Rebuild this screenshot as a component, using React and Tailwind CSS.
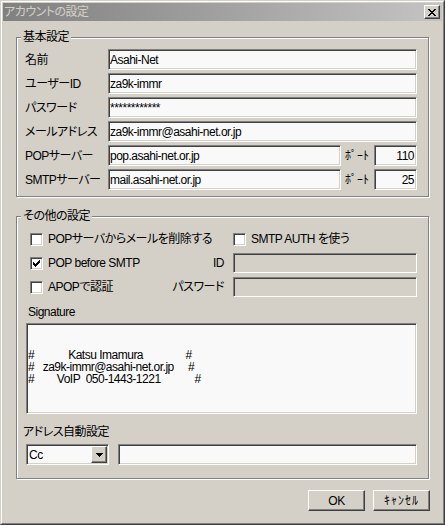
import React from 'react';

// Win2k-style bevels
const sunken =
  'border border-t-[#808080] border-l-[#808080] border-r-white border-b-white shadow-[inset_1px_1px_0_#404040,inset_-1px_-1px_0_#d4d0c8]';
const raised =
  'border border-t-white border-l-white border-r-[#404040] border-b-[#404040] shadow-[inset_-1px_-1px_0_#808080]';
const etched = 'border border-[#808080] shadow-[inset_1px_1px_0_#ffffff,1px_1px_0_#ffffff]';

function TextBox({ value = '', className = '', disabled = false, right = false, h = 'h-[21px]' }) {
  return (
    <div
      className={`${sunken} ${h} flex items-center whitespace-pre overflow-hidden ${
        disabled ? 'bg-[#d4d0c8]' : 'bg-[#f9f9f9]'
      } ${right ? 'justify-end pr-[2px]' : 'pl-[1px]'} ${className}`}
    >
      {value}
    </div>
  );
}

function CheckBox({ checked = false }) {
  return (
    <div className={`${sunken} w-[13px] h-[13px] shrink-0 bg-white flex items-center justify-center`}>
      {checked && (
        <svg width="7" height="7" viewBox="0 0 7 7" shapeRendering="crispEdges">
          <path
            d="M6 0h1v1h-1z M5 1h2v1h-2z M0 2h1v1h-1z M4 2h3v1h-3z M0 3h2v1h-2z M3 3h3v1h-3z M0 4h5v1h-5z M1 5h3v1h-3z M2 6h1v1h-1z"
            fill="#000"
          />
        </svg>
      )}
    </div>
  );
}

function GroupBox({ title, className = '', children }) {
  return (
    <div className={`${etched} ${className}`}>
      <div className="-mt-[8px] ml-[4px] w-fit px-[2px] bg-[#d4d0c8] leading-[14px]">{title}</div>
      {children}
    </div>
  );
}

function Row({ label, children }) {
  return (
    <div className="flex items-center h-[21px]">
      <span className="w-[83px] shrink-0 leading-[14px]">{label}</span>
      {children}
    </div>
  );
}

export default function App() {
  const sig = [
    '',
    '',
    '#            Katsu Imamura               #',
    '#   za9k-immr@asahi-net.or.jp     #',
    '#        VoIP  050-1443-1221            #',
  ];

  return (
    <div className="w-[445px] h-[525px] border border-t-[#d4d0c8] border-l-[#d4d0c8] border-r-[#404040] border-b-[#404040] bg-[#d4d0c8] text-black text-[12px] leading-[14px] tracking-[-0.5px] [font-feature-settings:'palt'] font-['Liberation_Sans','Noto_Sans_CJK_JP',sans-serif]">
      <div className="h-full border border-t-white border-l-white border-r-[#808080] border-b-[#808080] p-px flex flex-col">
        {/* Title bar (inactive) */}
        <div className="h-[18px] shrink-0 flex items-center bg-linear-to-r from-[#808080] to-[#c4c4c4]">
          <span className="flex-1 pl-[1px] text-[#d4d0c8]">アカウントの設定</span>
          <div className={`${raised} w-[16px] h-[14px] mr-[2px] bg-[#d4d0c8] flex items-center justify-center`}>
            <svg width="8" height="7" viewBox="0 0 8 7" shapeRendering="crispEdges">
              <path
                d="M0 0h2v1h-2z M6 0h2v1h-2z M1 1h2v1h-2z M5 1h2v1h-2z M2 2h4v1h-4z M3 3h2v1h-2z M2 4h4v1h-4z M1 5h2v1h-2z M5 5h2v1h-2z M0 6h2v1h-2z M6 6h2v1h-2z"
                fill="#000"
              />
            </svg>
          </div>
        </div>

        {/* Body */}
        <div className="flex flex-col pr-[12px]">
          <GroupBox title="基本設定" className="mt-[16px] ml-[13px] w-[413px] h-[160px]">
            <div className="mt-[5px] pl-[8px] pr-[11px] flex flex-col gap-[3px]">
              <Row label="名前">
                <TextBox value="Asahi-Net" className="flex-1" />
              </Row>
              <Row label="ユーザーID">
                <TextBox value="za9k-immr" className="flex-1" />
              </Row>
              <Row label="パスワード">
                <TextBox value="************" className="flex-1" />
              </Row>
              <Row label="メールアドレス">
                <TextBox value="za9k-immr@asahi-net.or.jp" className="flex-1" />
              </Row>
              <Row label="POPサーバー">
                <TextBox value="pop.asahi-net.or.jp" className="w-[233px]" />
                <span className="ml-[4px] w-[29px] tracking-normal">ﾎﾟｰﾄ</span>
                <TextBox value="110" right className="flex-1" />
              </Row>
              <Row label="SMTPサーバー">
                <TextBox value="mail.asahi-net.or.jp" className="w-[233px]" />
                <span className="ml-[4px] w-[29px] tracking-normal">ﾎﾟｰﾄ</span>
                <TextBox value="25" right className="flex-1" />
              </Row>
            </div>
          </GroupBox>

          <GroupBox title="その他の設定" className="mt-[19px] ml-[13px] w-[413px] h-[263px]">
            <div className="pl-[6px] pr-[11px] flex flex-col">
              <div className="mt-[6px] ml-[7px] flex flex-col gap-[4px]">
                <div className="flex items-center h-[20px]">
                  <div className="w-[203px] shrink-0 flex items-center">
                    <CheckBox />
                    <span className="ml-[5px]">POPサーバからメールを削除する</span>
                  </div>
                  <CheckBox />
                  <span className="ml-[5px]">SMTP AUTH を使う</span>
                </div>
                <div className="flex items-center h-[20px]">
                  <div className="w-[203px] shrink-0 flex items-center">
                    <CheckBox checked />
                    <span className="ml-[5px]">POP before SMTP</span>
                    <span className="flex-1 text-right pr-[9px]">ID</span>
                  </div>
                  <TextBox disabled h="h-[20px]" className="flex-1" />
                </div>
                <div className="flex items-center h-[20px]">
                  <div className="w-[203px] shrink-0 flex items-center">
                    <CheckBox />
                    <span className="ml-[5px]">APOPで認証</span>
                    <span className="flex-1 text-right pr-[9px]">パスワード</span>
                  </div>
                  <TextBox disabled h="h-[20px]" className="flex-1" />
                </div>
              </div>

              <div className="mt-[8px] ml-[5px]">Signature</div>
              <div className={`${sunken} mt-[4px] ml-[3px] h-[91px] bg-[#f9f9f9] pt-[1px] pl-px leading-[12px] whitespace-pre overflow-hidden`}>
                {sig.map((line, i) => (
                  <div key={i} className="h-[12px]">
                    {line}
                  </div>
                ))}
              </div>

              <div className="mt-[11px]">アドレス自動設定</div>
              <div className="mt-[5px] ml-[3px] flex h-[21px]">
                <div className={`${sunken} w-[83px] h-[21px] shrink-0 bg-[#f9f9f9] flex items-center`}>
                  <span className="flex-1 pl-[2px]">Cc</span>
                  <div className={`${raised} w-[16px] h-[17px] mr-px bg-[#d4d0c8] flex items-center justify-center`}>
                    <svg width="7" height="4" viewBox="0 0 7 4" shapeRendering="crispEdges">
                      <path d="M0 0h7v1h-7z M1 1h5v1h-5z M2 2h3v1h-3z M3 3h1v1h-1z" fill="#000" />
                    </svg>
                  </div>
                </div>
                <TextBox className="ml-[9px] flex-1" />
              </div>
            </div>
          </GroupBox>

          <div className="mt-[11px] flex justify-end gap-[8px]">
            <div className={`${raised} w-[57px] h-[21px] bg-[#d4d0c8] flex items-center justify-center`}>OK</div>
            <div className={`${raised} w-[57px] h-[21px] bg-[#d4d0c8] flex items-center justify-center tracking-[1px]`}>
              ｷｬﾝｾﾙ
            </div>
          </div>
        </div>
      </div>
    </div>
  );
}
